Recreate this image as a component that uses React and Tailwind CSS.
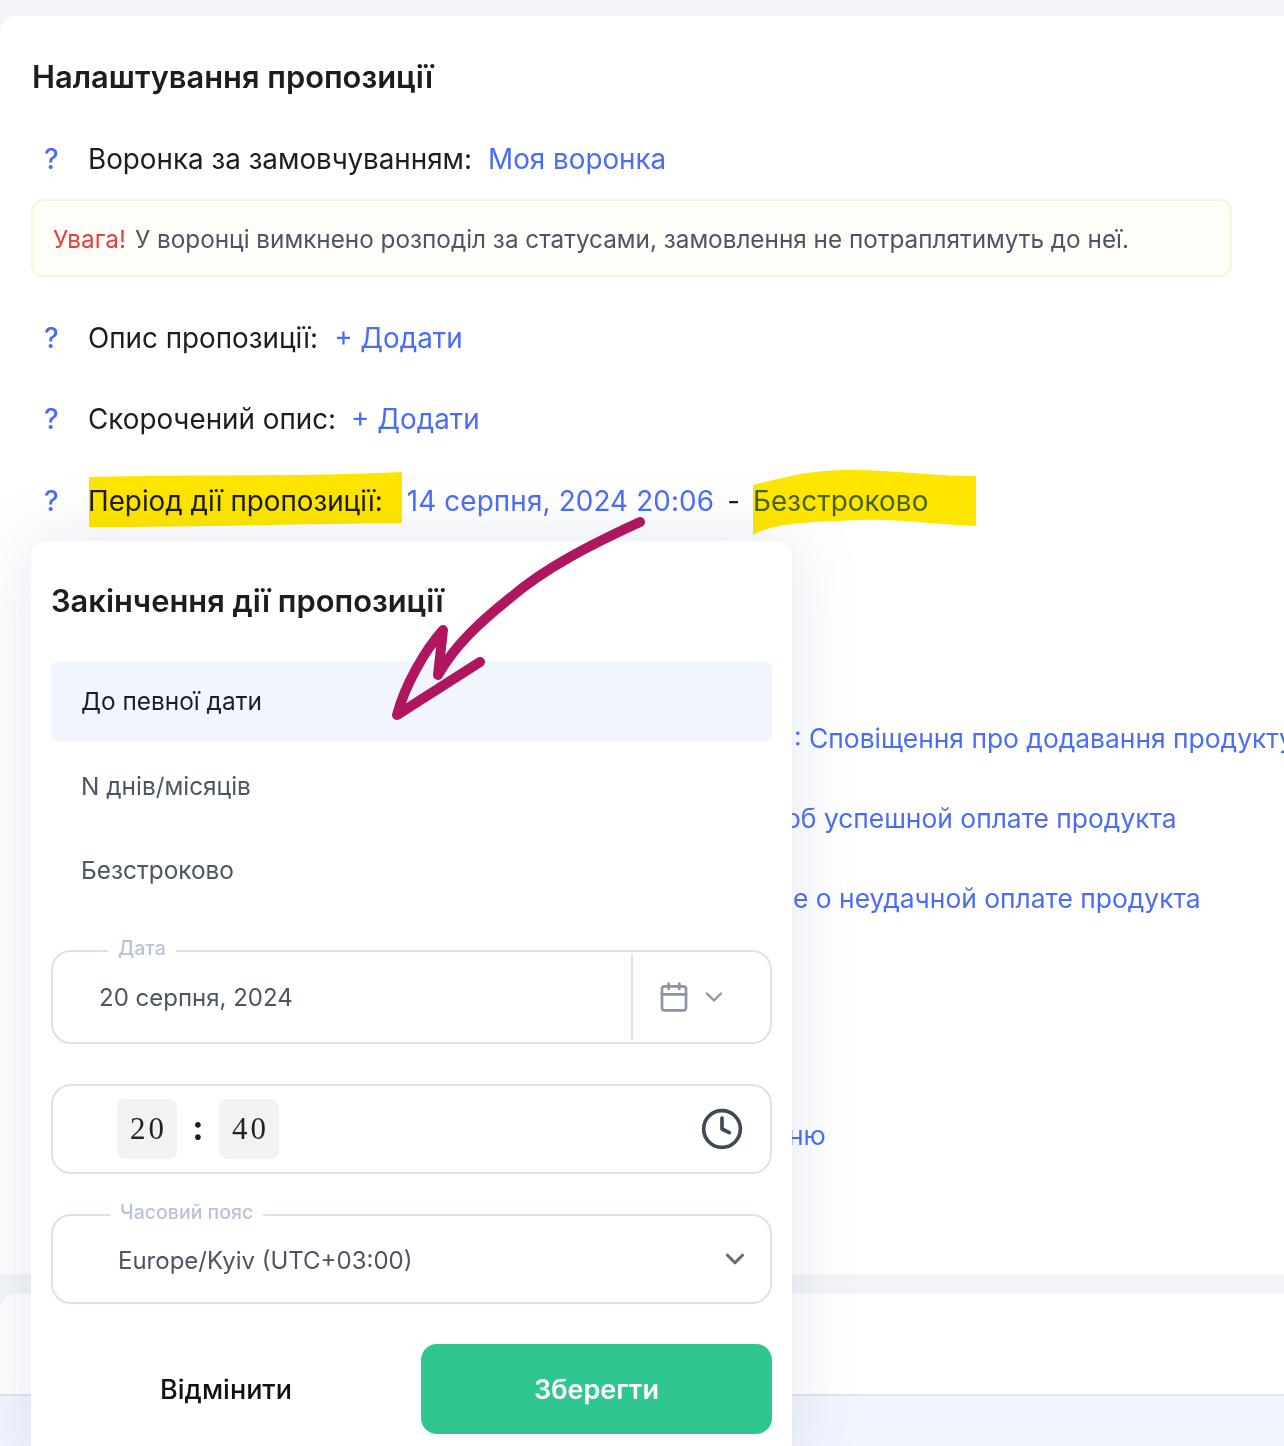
import React from "react";
import { Calendar, ChevronDown, Clock } from "lucide-react";

const Help = () => (
  <span className="w-[56px] shrink-0 pl-[12px] font-medium text-[#4a6cf7]">?</span>
);

const Row = ({ className = "", children }) => (
  <div className={`flex items-center whitespace-nowrap text-[27.8px] leading-[40px] text-[#1c1c22] ${className}`}>
    <Help />
    {children}
  </div>
);

const TailRow = ({ className = "", children }) => (
  <div className={`whitespace-nowrap text-[26.4px] leading-[40px] text-[#4a6cf7] ${className}`}>{children}</div>
);

const Option = ({ active, children }) => (
  <div
    className={`flex h-[81px] items-center rounded-lg pl-[30px] text-[24.4px] ${
      active ? "bg-[#f1f5fe] text-[#1c1c22]" : "text-[#4b5563]"
    }`}
  >
    {children}
  </div>
);

const Legend = ({ className = "", children }) => (
  <span className={`absolute top-[-16px] bg-white px-[10px] text-[19.5px] font-medium leading-[24px] text-[#b9c3d6] ${className}`}>
    {children}
  </span>
);

const TimeBox = ({ children }) => (
  <span className="flex h-[60px] w-[60px] items-center justify-center rounded-lg bg-[#f2f2f2] pl-[3px] font-['Liberation_Serif',serif] text-[31px] tracking-[3px] text-[#222]">
    {children}
  </span>
);

const Overlay = () => (
  <svg className="pointer-events-none absolute left-0 top-0 h-[1446px] w-[1284px]" viewBox="0 0 1284 1446" fill="none">
    <g className="mix-blend-multiply" fill="#ffe600">
      <path d="M89 477 C190 474 300 477 402 472 L402 523 C300 524 190 527 89 527 Z" />
      <path d="M753 485 C790 476 810 470 850 470 C900 470 925 476 976 476 L976 526 C930 524 900 519 860 520 C815 522 775 522 753 535 Z" />
    </g>
    <path
      d="M640 522 C590 545 545 568 510 598 C480 622 455 645 438 675 L443 630 C425 650 405 685 397 715 L480 662"
      stroke="#b0155f"
      strokeWidth="10"
      strokeLinecap="round"
      strokeLinejoin="round"
    />
  </svg>
);

export default function App() {
  return (
    <div className="relative h-[1446px] overflow-hidden bg-[#f3f5f8] pt-[16px] font-['Inter',sans-serif]">
      {/* Settings card */}
      <div className="h-[1258px] rounded-tl-2xl bg-white pl-[32px] pt-[41px]">
        <h2 className="text-[30.85px] font-semibold leading-[40px] text-[#1c1c22]">Налаштування пропозиції</h2>

        <Row className="mt-[42px]">
          <span>Воронка за замовчуванням:</span>
          <span className="ml-[16px] text-[#4a6cf7]">Моя воронка</span>
        </Row>

        <div className="mt-[20px] flex h-[78px] w-[1201px] -translate-x-px items-center rounded-xl border-2 border-[#fbf3dc] bg-[#fffdf7] pl-[20px] pt-[2px] text-[24.3px] text-[#4b5563]">
          <span className="mr-[9px] text-[#e53e3e]">Увага!</span>
          У воронці вимкнено розподіл за статусами, замовлення не потраплятимуть до неї.
        </div>

        <Row className="mt-[41px]">
          <span>Опис пропозиції:</span>
          <span className="ml-[16px] text-[#4a6cf7]">+ Додати</span>
        </Row>
        <Row className="mt-[41px]">
          <span>Скорочений опис:</span>
          <span className="ml-[15px] text-[#4a6cf7]">+ Додати</span>
        </Row>
        <Row className="mt-[42px]">
          <span>Період дії пропозиції:</span>
          <span className="ml-[24px] tracking-[0.15px] text-[#4a6cf7]">14 серпня, 2024 20:06</span>
          <span className="mx-[13px]">-</span>
          <span className="tracking-[0.1px] text-[#4a6cf7]">Безстроково</span>
        </Row>

        <TailRow className="mt-[197px] pl-[762px]">: Сповіщення про додавання продукту</TailRow>
        <TailRow className="mt-[40px] pl-[753px]">об успешной оплате продукта</TailRow>
        <TailRow className="mt-[40px] pl-[761px]">е о неудачной оплате продукта</TailRow>
        <TailRow className="mt-[197px] pl-[756px]">ню</TailRow>
      </div>

      {/* Second card */}
      <div className="mt-[20px] rounded-tl-2xl bg-white pt-[100px]">
        <div className="h-[60px] border-t-2 border-[#e2e4ee] bg-[#f1f5fd]" />
      </div>

      {/* Expiry popover */}
      <div className="absolute left-[31px] top-[541px] h-[920px] w-[761px] rounded-2xl bg-white px-[20px] pt-[40px] shadow-[0_0_70px_rgba(90,110,170,0.16)]">
        <h3 className="text-[30.85px] font-semibold leading-[40px] text-[#1c1c22]">Закінчення дії пропозиції</h3>

        <div className="mt-[40px] flex flex-col gap-[3.5px]">
          <Option active>До певної дати</Option>
          <Option>N днів/місяців</Option>
          <Option>Безстроково</Option>
        </div>

        <div className="relative mt-[39px] flex h-[94px] items-center rounded-[20px] border-2 border-[#e0e0ec]">
          <Legend className="left-[55px]">Дата</Legend>
          <span className="flex-1 pl-[46px] pt-[1px] text-[24px] text-[#4b5563]">20 серпня, 2024</span>
          <div className="flex h-[86px] w-[139px] items-center border-l-2 border-[#e0e0ec] pl-[25px] text-[#8a95a5]">
            <Calendar size={32} strokeWidth={2} />
            <ChevronDown size={28} strokeWidth={2} className="ml-[10px]" />
          </div>
        </div>

        <div className="mt-[40px] flex h-[90px] items-center rounded-[20px] border-2 border-[#e0e0ec] pl-[64px] pr-[26px]">
          <TimeBox>20</TimeBox>
          <span className="-mt-[3px] w-[42px] text-center text-[34px] font-bold text-[#1c1c22]">:</span>
          <TimeBox>40</TimeBox>
          <Clock size={44} strokeWidth={2} className="ml-auto text-[#3f4a59]" />
        </div>

        <div className="relative mt-[40px] flex h-[90px] items-center justify-between rounded-[20px] border-2 border-[#e0e0ec] pl-[65px] pr-[20px] text-[24px] text-[#4b5563]">
          <Legend className="left-[57px]">Часовий пояс</Legend>
          <span className="pt-[3px]">Europe/Kyiv (UTC+03:00)</span>
          <ChevronDown size={30} strokeWidth={2.5} className="text-[#6b6b6b]" />
        </div>

        <div className="mt-[40px] flex gap-[20px]">
          <button className="h-[90px] w-[350px] pt-[3px] text-[27px] font-medium text-[#111]">Відмінити</button>
          <button className="h-[90px] w-[351px] rounded-2xl bg-[#2fc68f] pt-[3px] text-[27px] font-semibold text-white">Зберегти</button>
        </div>
      </div>

      <Overlay />
    </div>
  );
}
